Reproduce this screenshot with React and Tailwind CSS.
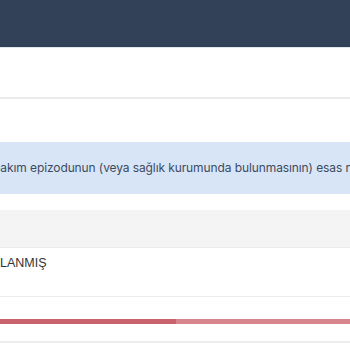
export default function App() {
  return (
    <div className="w-[350px] h-[350px] overflow-hidden bg-white flex flex-col">
      <div className="h-[47px] bg-[#324158] shrink-0" />
      <div className="h-px bg-[#dfe6ee] shrink-0" />
      <div className="h-[49px] shrink-0" />
      <div className="h-[2px] bg-[#ebebeb] shrink-0" />
      <div className="h-[43px] shrink-0" />
      <div className="h-[52px] bg-[#d8e5f6] shrink-0 flex items-center overflow-hidden">
        <span className="whitespace-nowrap ml-[-7px] mt-[-1px] text-[12px] tracking-[-0.1px] text-[#3d4b5e] font-['Inter',sans-serif]">
          bakım epizodunun (veya sağlık kurumunda bulunmasının) esas nedeni
        </span>
      </div>
      <div className="h-[16px] shrink-0" />
      <div className="h-[37px] bg-[#f4f4f4] shrink-0" />
      <div className="h-px bg-[#ececec] shrink-0" />
      <div className="h-[48px] shrink-0 pt-[1px] overflow-hidden">
        <span className="whitespace-nowrap text-[12.5px] text-[#333] font-['Liberation_Sans',Arial,sans-serif]">
          LANMIŞ
        </span>
      </div>
      <div className="h-px bg-[#ececec] shrink-0" />
      <div className="h-[22px] shrink-0" />
      <div className="h-[5px] shrink-0 flex">
        <div className="w-[176px] bg-[#c9626d]" />
        <div className="flex-1 bg-[#d7868d]" />
      </div>
      <div className="h-[17px] shrink-0" />
      <div className="h-[2px] bg-[#ececec] shrink-0" />
      <div className="flex-1" />
    </div>
  );
}
